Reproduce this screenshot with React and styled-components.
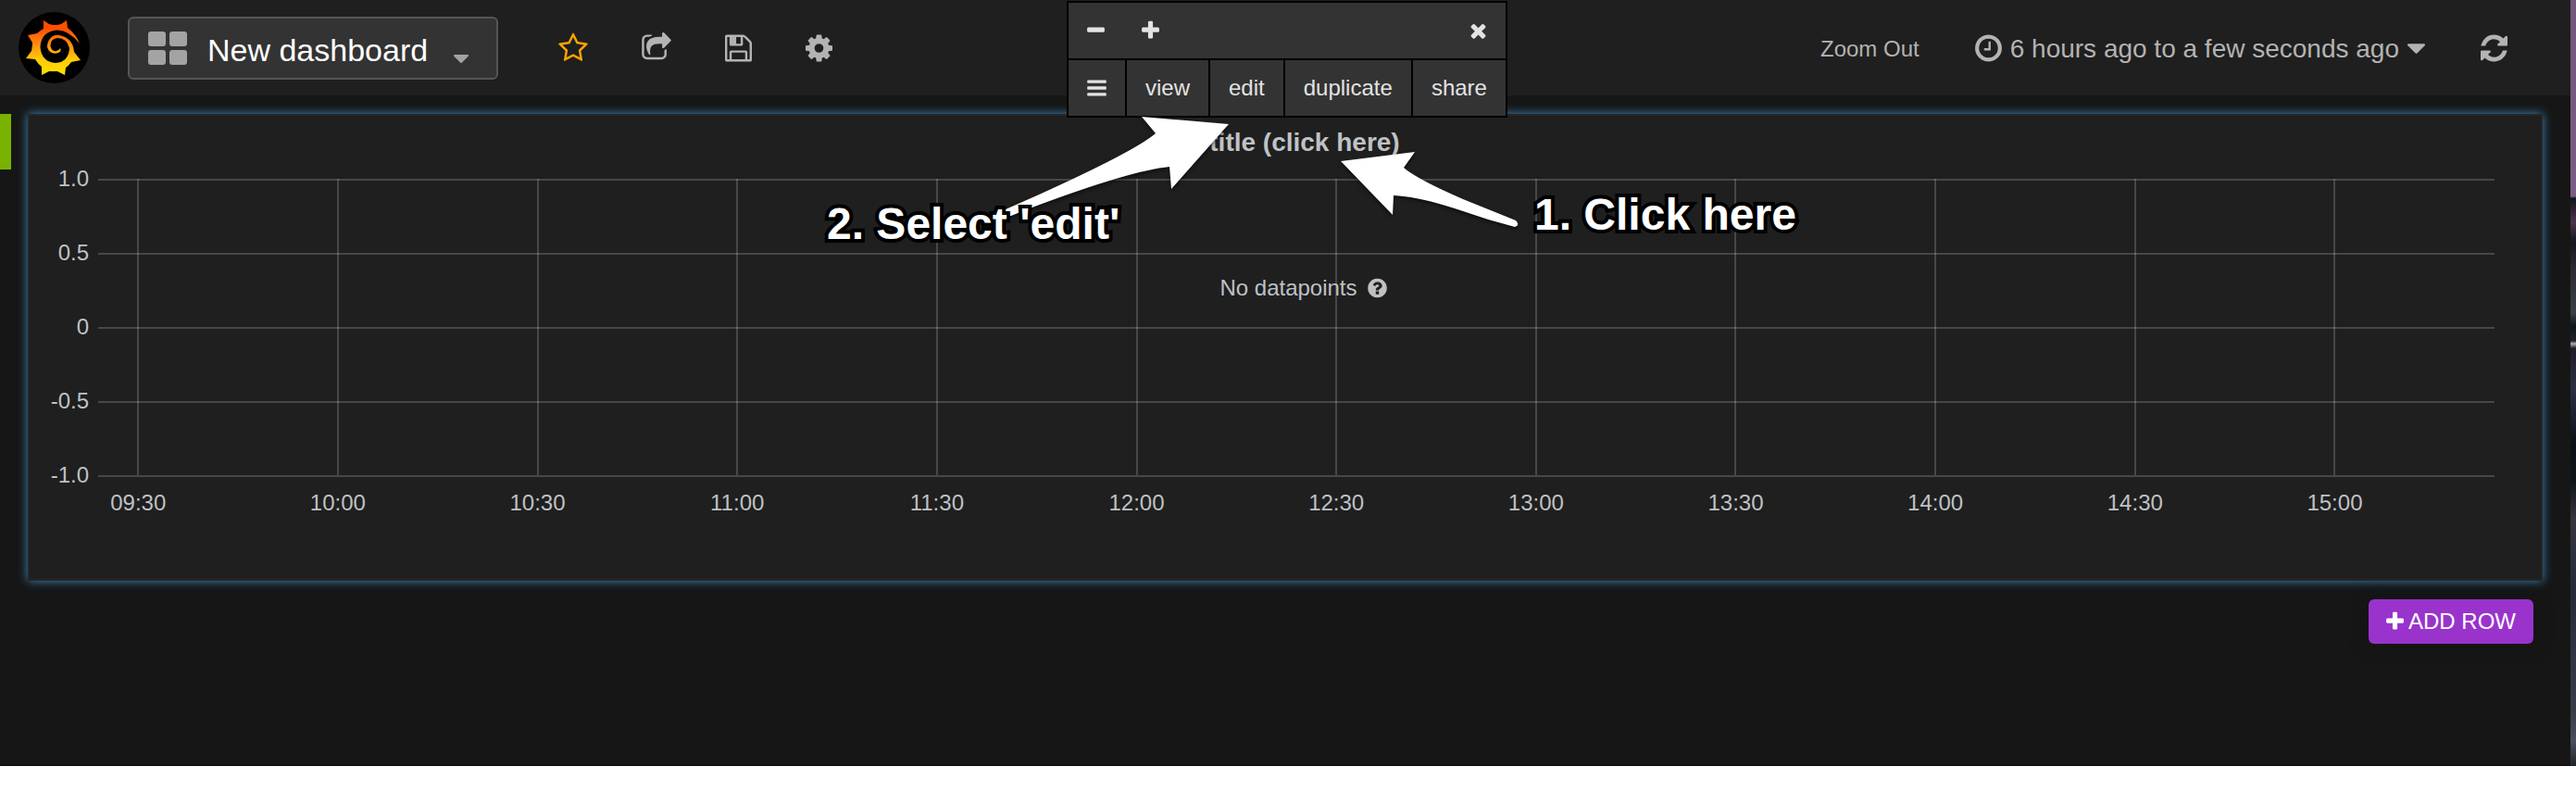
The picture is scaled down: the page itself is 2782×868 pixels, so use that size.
import React from 'react';
import styled, { createGlobalStyle } from 'styled-components';

const GlobalStyle = createGlobalStyle`
  * { box-sizing: border-box; }
  body {
    margin: 0;
    background: #fff;
    font-family: "Liberation Sans", Arial, sans-serif;
    font-size: 24px;
    color: #bfc2c5;
  }
  button { font-family: inherit; }
`;

/* ---------- icons ---------- */

const ICONS = {
  star: [1664, 'M1201 1004l306-297-422-62-189-382-189 382-422 62 306 297-73 421 378-199 377 199zm527-357q0 22-26 48l-363 354 86 500q1 7 1 20 0 50-41 50-19 0-40-12l-449-236-449 236q-22 12-40 12-21 0-31.5-14.5t-10.5-35.5q0-6 2-20l86-500-364-354q-25-27-25-48 0-37 56-46l502-73 225-455q19-41 49-41t49 41l225 455 502 73q56 9 56 46z'],
  share: [1664, 'M1472 989v259q0 119-84.5 203.5t-203.5 84.5h-832q-119 0-203.5-84.5t-84.5-203.5v-832q0-119 84.5-203.5t203.5-84.5h255q13 0 22.5 9.5t9.5 22.5q0 27-26 32-77 26-133 60-10 4-16 4h-112q-66 0-113 47t-47 113v832q0 66 47 113t113 47h832q66 0 113-47t47-113v-214q0-19 18-29 28-13 54-37 16-16 35-8 21 9 21 29zm237-496l-384 384q-18 19-45 19-12 0-25-5-39-17-39-59v-192h-160q-323 0-438 131-119 137-74 473 3 23-20 34-8 2-12 2-16 0-26-13-10-14-21-31t-39.5-68.5-49.5-99.5-38.5-114-17.5-122q0-49 3.5-91t14-90 28-88 47-81.5 68.5-74 94.5-61.5 124.5-48.5 159.5-30.5 196.5-11h160v-192q0-42 39-59 13-5 25-5 26 0 45 19l384 384q19 19 19 45t-19 45z'],
  save: [1536, 'M512 1536h768v-384h-768v384zm896 0h128v-896q0-14-10-38.5t-20-34.5l-281-281q-10-10-34-20t-39-10v416q0 40-28 68t-68 28h-576q-40 0-68-28t-28-68v-416h-128v1280h128v-416q0-40 28-68t68-28h832q40 0 68 28t28 68v416zm-384-928v-320q0-13-9.5-22.5t-22.5-9.5h-192q-13 0-22.5 9.5t-9.5 22.5v320q0 13 9.5 22.5t22.5 9.5h192q13 0 22.5-9.5t9.5-22.5zm640 32v928q0 40-28 68t-68 28h-1344q-40 0-68-28t-28-68v-1344q0-40 28-68t68-28h928q40 0 88 20t76 48l280 280q28 28 48 76t20 88z'],
  cog: [1536, 'M1152 896q0-106-75-181t-181-75-181 75-75 181 75 181 181 75 181-75 75-181zm512-109v222q0 12-8 23t-20 13l-185 28q-19 54-39 91 35 50 107 138 10 12 10 25t-9 23q-27 37-99 108t-94 71q-12 0-26-9l-138-108q-44 23-91 38-16 136-29 186-7 28-36 28h-222q-14 0-24.5-8.5t-11.5-21.5l-28-184q-49-16-90-37l-141 107q-10 9-25 9-14 0-25-11-126-114-165-168-7-10-7-23 0-12 8-23 15-21 51-66.5t54-70.5q-27-50-41-99l-183-27q-13-2-21-12.5t-8-23.5v-222q0-12 8-23t19-13l186-28q14-46 39-92-40-57-107-138-10-12-10-24 0-10 9-23 26-36 98.5-107.5t94.5-71.5q13 0 26 10l138 107q44-23 91-38 16-136 29-186 7-28 36-28h222q14 0 24.5 8.5t11.5 21.5l28 184q49 16 90 37l142-107q9-9 24-9 13 0 25 10 129 119 165 170 7 8 7 22 0 12-8 23-15 21-51 66.5t-54 70.5q26 50 41 98l183 28q13 2 21 12.5t8 23.5z'],
  clock: [1536, 'M1024 544v448q0 14-9 23t-23 9h-320q-14 0-23-9t-9-23v-64q0-14 9-23t23-9h224v-352q0-14 9-23t23-9h64q14 0 23 9t9 23zm416 352q0-148-73-273t-198-198-273-73-273 73-198 198-73 273 73 273 198 198 273 73 273-73 198-198 73-273zm224 0q0 209-103 385.5t-279.5 279.5-385.5 103-385.5-103-279.5-279.5-103-385.5 103-385.5 279.5-279.5 385.5-103 385.5 103 279.5 279.5 103 385.5z'],
  refresh: [1536, 'M1639 1056q0 5-1 7-64 268-268 434.5t-478 166.5q-146 0-282.5-55t-243.5-157l-129 129q-19 19-45 19t-45-19-19-45v-448q0-26 19-45t45-19h448q26 0 45 19t19 45-19 45l-137 137q71 66 161 102t187 36q134 0 250-65t186-179q11-17 53-117 8-23 30-23h192q13 0 22.5 9.5t9.5 22.5zm25-800v448q0 26-19 45t-45 19h-448q-26 0-45-19t-19-45 19-45l138-138q-148-137-349-137-134 0-250 65t-186 179q-11 17-53 117-8 23-30 23h-199q-13 0-22.5-9.5t-9.5-22.5v-7q65-268 270-434.5t480-166.5q146 0 284 55.5t245 156.5l130-129q19-19 45-19t45 19 19 45z'],
  plus: [1408, 'M1600 736v192q0 40-28 68t-68 28h-416v416q0 40-28 68t-68 28h-192q-40 0-68-28t-28-68v-416h-416q-40 0-68-28t-28-68v-192q0-40 28-68t68-28h416v-416q0-40 28-68t68-28h192q40 0 68 28t28 68v416h416q40 0 68 28t28 68z'],
  minus: [1408, 'M1600 736v192q0 40-28 68t-68 28h-1216q-40 0-68-28t-28-68v-192q0-40 28-68t68-28h1216q40 0 68 28t28 68z'],
  times: [1408, 'M1490 1322q0 40-28 68l-136 136q-28 28-68 28t-68-28l-294-294-294 294q-28 28-68 28t-68-28l-136-136q-28-28-28-68t28-68l294-294-294-294q-28-28-28-68t28-68l136-136q28-28 68-28t68 28l294 294 294-294q28-28 68-28t68 28l136 136q28 28 28 68t-28 68l-294 294 294 294q28 28 28 68z'],
  bars: [1536, 'M1664 1344v128q0 26-19 45t-45 19h-1408q-26 0-45-19t-19-45v-128q0-26 19-45t45-19h1408q26 0 45 19t19 45zm0-512v128q0 26-19 45t-45 19h-1408q-26 0-45-19t-19-45v-128q0-26 19-45t45-19h1408q26 0 45 19t19 45zm0-512v128q0 26-19 45t-45 19h-1408q-26 0-45-19t-19-45v-128q0-26 19-45t45-19h1408q26 0 45 19t19 45z'],
  caret: [1024, 'M1408 704q0 26-19 45l-448 448q-19 19-45 19t-45-19l-448-448q-19-19-19-45t19-45 45-19h896q26 0 45 19t19 45z'],
  question: [1536, 'M1024 1376v-192q0-14-9-23t-23-9h-192q-14 0-23 9t-9 23v192q0 14 9 23t23 9h192q14 0 23-9t9-23zm256-672q0-88-55.5-163t-138.5-116-170-41q-243 0-371 213-15 24 8 42l132 100q7 6 19 6 16 0 25-12 53-68 86-92 34-24 86-24 48 0 85.5 26t37.5 59q0 38-20 61t-68 45q-63 28-115.5 86.5t-52.5 125.5v36q0 14 9 23t23 9h192q14 0 23-9t9-23q0-19 21.5-49.5t54.5-49.5q32-18 49-28.5t46-35 44.5-48 28-60.5 12.5-81zm384 192q0 209-103 385.5t-279.5 279.5-385.5 103-385.5-103-279.5-279.5-103-385.5 103-385.5 279.5-279.5 385.5-103 385.5 103 279.5 279.5 103 385.5z'],
};

const Glyph = styled.svg`
  display: block;
  flex: none;
  fill: currentColor;
`;

function Icon({ name, size = 24 }) {
  const [advance, d] = ICONS[name];
  return (
    <Glyph
      aria-hidden="true"
      height={size}
      width={Math.round((size * advance) / 1792)}
      viewBox={`${(1792 - advance) / 2} 0 ${advance} 1792`}
    >
      <path d={d} />
    </Glyph>
  );
}

function Logo() {
  return (
    <svg width="77" height="77" viewBox="0 0 77 77" role="img" aria-label="Grafana">
      <defs>
        <linearGradient id="flame" gradientUnits="userSpaceOnUse" x1="0" y1="9" x2="0" y2="68">
          <stop offset="0.15" stopColor="#ff4e00" />
          <stop offset="0.4" stopColor="#ff8410" />
          <stop offset="0.7" stopColor="#ffc80a" />
          <stop offset="1" stopColor="#ffe000" />
        </linearGradient>
      </defs>
      <circle cx="38.5" cy="38.5" r="38.5" fill="#000" />
      <path
        fill="url(#flame)"
        d="M27 9 L33 13 Q40 15 46 13 L52 9 L53 17 Q62 24 66 34 Q55 20 42 19.500 Q24 21 23.500 38 Q25 54 40 55
           Q54 54 55 39 Q52 28 42 28 Q34 29 34.500 37 Q36 43 41 42 Q44 41 45 39 Q47 42 43 44 Q37 46 33 42
           Q29 37 33 30 Q37 24 44 25 Q59 28 60 43 L67 52 L57 54 Q54 58 51 60 L50 68 L42 64
           Q37 64 33 64 L25 68 L25 59 Q21 56 18 51 L8 50 L14 42 Q15 37 15 33 L10 25 L20 23 Q23 20 27 18 Z"
      />
    </svg>
  );
}

function TilesIcon() {
  return (
    <Glyph width="42" height="36" viewBox="0 0 42 36" aria-hidden="true">
      <rect x="0" y="0" width="19" height="16" rx="3" />
      <rect x="23" y="0" width="19" height="16" rx="3" />
      <rect x="0" y="20" width="19" height="16" rx="3" />
      <rect x="23" y="20" width="19" height="16" rx="3" />
    </Glyph>
  );
}

/* ---------- page frame ---------- */

const Window = styled.div`
  position: relative;
  display: flex;
`;

const Page = styled.div`
  position: relative;
  flex: 1;
  min-width: 0;
  padding-bottom: 132px;
  background: #161616;
  box-shadow: inset 0 -1px #100c10;
`;

const Wallpaper = styled.div`
  width: 6px;
  background: linear-gradient(
    #74577d 0, #7a5d86 212px, #12141c 214px, #4a3548 240px, #14161e 262px, #2a2a34 290px,
    #3a4048 338px, #10141a 352px, #20222a 368px, #b0b0b8 371px, #231c26 376px, #2a3044 420px,
    #0c1016 480px, #10131a 520px, #35363f 560px, #262a38 640px, #2f3444 700px,
    #3a3c46 770px, #4c4e5a 800px, #22242c 827px
  );
`;

/* ---------- top bar ---------- */

const TopBar = styled.header`
  display: flex;
  align-items: center;
  height: 103px;
  padding: 0 68px 0 20px;
  background: #1f1f1f;
  color: #b3b3b3;
`;

const LogoLink = styled.a`
  display: flex;
  margin-right: 41px;
`;

const DashboardPicker = styled.button`
  display: flex;
  align-items: center;
  width: 400px;
  height: 68px;
  padding: 0 30px 0 20px;
  border: 2px solid #555;
  border-radius: 6px;
  background: #333;
  color: #a3a3a3;
`;

const DashboardName = styled.span`
  flex: 1;
  padding: 4px 0 0 22px;
  font-size: 34px;
  line-height: 40px;
  text-align: left;
  color: #fff;
`;

const CaretSlot = styled.span`
  padding-top: 22px;
`;

const IconNav = styled.nav`
  display: flex;
  margin-left: 36px;
`;

const BarButton = styled.button`
  display: flex;
  align-items: center;
  gap: 9px;
  padding: ${(p) => p.$pad || '0 29px'};
  border: 0;
  background: none;
  font-size: ${(p) => p.$size || '24px'};
  line-height: 34px;
  color: ${(p) => p.$color || 'inherit'};
  white-space: nowrap;
`;

const BarLabel = styled.span`
  padding-top: 3px;
`;

const TimeNav = styled.nav`
  display: flex;
  align-items: center;
  gap: 60px;
  margin-left: auto;
`;

/* ---------- panel ---------- */

const Row = styled.section`
  display: flex;
  align-items: flex-start;
  padding: 20px 30px 20px 0;
`;

const RowHandle = styled.button`
  width: 12px;
  height: 60px;
  margin-right: 18px;
  padding: 0;
  border: 0;
  background: #77b300;
`;

const Panel = styled.article`
  flex: 1;
  min-width: 0;
  height: 504px;
  border: 2px solid #262626;
  background: #1f1f1f;
  box-shadow: 0 0 10px #3f8bc0;
`;

const PanelTitle = styled.h2`
  margin: 0;
  padding-top: 12px;
  font-size: 28px;
  line-height: 34px;
  font-weight: 700;
  text-align: center;
`;

const Chart = styled.div`
  display: flex;
  padding: 9px 50px 0 0;
`;

const YAxis = styled.div`
  display: flex;
  flex-direction: column;
  justify-content: space-between;
  width: 64px;
  height: 346px;
  margin-right: 10px;
  line-height: 26px;
  text-align: right;
`;

const Plot = styled.div`
  position: relative;
  flex: 1;
  min-width: 0;
  padding-top: 13px;
`;

const PlotSvg = styled.svg`
  display: block;
  width: 100%;
  height: 370px;
  overflow: visible;

  line {
    stroke: #fff;
    stroke-opacity: 0.18;
    stroke-width: 2;
    shape-rendering: crispEdges;
  }
  text {
    fill: #bfc2c5;
    font-size: 24px;
    text-anchor: middle;
  }
`;

const EmptyNote = styled.div`
  position: absolute;
  top: 116px;
  left: 0;
  right: 0;
  display: flex;
  align-items: center;
  justify-content: center;
  gap: 11px;
  line-height: 30px;
  padding-left: 15px;
`;

const AddRowBar = styled.div`
  display: flex;
  justify-content: flex-end;
  padding-right: 40px;
`;

const AddRowButton = styled.button`
  display: flex;
  align-items: center;
  justify-content: center;
  gap: 5px;
  height: 48px;
  padding: 0 19px;
  border: 0;
  border-radius: 6px;
  background: #9933cc;
  color: #fff;
  font-size: 24px;
  box-shadow: 0 0 20px #141414;
`;

/* ---------- floating panel menu ---------- */

const PanelMenu = styled.div`
  position: absolute;
  top: 1px;
  left: calc(50% - 236px);
  display: flex;
  flex-direction: column;
  gap: 2px;
  width: 476px;
  border: 2px solid #000;
  background: #000;
`;

const MenuRow = styled.div`
  display: flex;
  gap: ${(p) => p.$gap || '0'};
  background: ${(p) => (p.$gap ? '#000' : '#333')};
`;

const MenuButton = styled.button`
  display: flex;
  flex: ${(p) => (p.$grow ? '1' : 'none')};
  align-items: center;
  justify-content: center;
  height: 60px;
  margin-left: ${(p) => (p.$end ? 'auto' : '0')};
  padding: 0 20px;
  border: 0;
  background: #333;
  color: #e3e3e3;
  font-size: 24px;
`;

/* ---------- annotations ---------- */

const Arrows = styled.svg`
  position: absolute;
  top: 110px;
  left: calc(50% - 308px);
  filter: drop-shadow(0 2px 2px rgba(0, 0, 0, 0.6));
  pointer-events: none;
`;

const Callout = styled.p`
  position: absolute;
  top: ${(p) => p.$top};
  left: calc(50% ${(p) => p.$shift});
  margin: 0;
  font-size: 48px;
  line-height: 56px;
  font-weight: 700;
  white-space: nowrap;
  color: #fff;
  -webkit-text-stroke: 8px #000;
  paint-order: stroke fill;
  stroke-linejoin: round;
  text-shadow: 0 2px 3px rgba(0, 0, 0, 0.6);
`;

const yTicks = ['1.0', '0.5', '0', '-0.5', '-1.0'];
const xTicks = [
  '09:30', '10:00', '10:30', '11:00', '11:30', '12:00',
  '12:30', '13:00', '13:30', '14:00', '14:30', '15:00',
];
const xAt = (i) => `${(1.67 + i * 8.333).toFixed(3)}%`;

export default function App() {
  return (
    <>
      <GlobalStyle />
      <Window>
        <Page>
          <TopBar>
            <LogoLink href="#home"><Logo /></LogoLink>
            <DashboardPicker>
              <TilesIcon />
              <DashboardName>New dashboard</DashboardName>
              <CaretSlot><Icon name="caret" size={28} /></CaretSlot>
            </DashboardPicker>
            <IconNav>
              <BarButton aria-label="Star" $color="#ffa500"><Icon name="star" size={34} /></BarButton>
              <BarButton aria-label="Share dashboard"><Icon name="share" size={34} /></BarButton>
              <BarButton aria-label="Save"><Icon name="save" size={34} /></BarButton>
              <BarButton aria-label="Settings"><Icon name="cog" size={34} /></BarButton>
            </IconNav>
            <TimeNav>
              <BarButton $pad="0"><BarLabel>Zoom Out</BarLabel></BarButton>
              <BarButton $pad="0" $size="28px">
                <Icon name="clock" size={34} />
                <BarLabel>6 hours ago to a few seconds ago</BarLabel>
                <Icon name="caret" size={34} />
              </BarButton>
              <BarButton $pad="0" aria-label="Refresh"><Icon name="refresh" size={34} /></BarButton>
            </TimeNav>
          </TopBar>

          <Row>
            <RowHandle aria-label="Row menu" />
            <Panel>
              <PanelTitle>no title (click here)</PanelTitle>
              <Chart>
                <YAxis>
                  {yTicks.map((t) => <span key={t}>{t}</span>)}
                </YAxis>
                <Plot>
                  <PlotSvg>
                    {yTicks.map((t, i) => (
                      <line key={t} x1="0" x2="100%" y1={1 + i * 80} y2={1 + i * 80} />
                    ))}
                    {xTicks.map((t, i) => (
                      <g key={t}>
                        <line x1={xAt(i)} x2={xAt(i)} y1="0" y2="320" />
                        <text x={xAt(i)} y="358">{t}</text>
                      </g>
                    ))}
                  </PlotSvg>
                  <EmptyNote>No datapoints <Icon name="question" size={24} /></EmptyNote>
                </Plot>
              </Chart>
            </Panel>
          </Row>

          <AddRowBar>
            <AddRowButton><Icon name="plus" />ADD ROW</AddRowButton>
          </AddRowBar>

          <PanelMenu>
            <MenuRow>
              <MenuButton aria-label="Shrink"><Icon name="minus" /></MenuButton>
              <MenuButton aria-label="Grow"><Icon name="plus" /></MenuButton>
              <MenuButton aria-label="Remove" $end><Icon name="times" /></MenuButton>
            </MenuRow>
            <MenuRow $gap="2px">
              <MenuButton aria-label="Menu"><Icon name="bars" /></MenuButton>
              <MenuButton>view</MenuButton>
              <MenuButton>edit</MenuButton>
              <MenuButton>duplicate</MenuButton>
              <MenuButton $grow>share</MenuButton>
            </MenuRow>
          </PanelMenu>

          <Arrows width="570" height="150" viewBox="1080 110 570 150" fill="#fff" aria-hidden="true">
            <path d="M1327 134L1233 126L1248 144Q1226 163 1120 211L1086 226Q1084 234 1092 233Q1104 228 1120 222Q1222 184 1263 180L1265 204Z" />
            <path d="M1448 174L1528 164L1516 181Q1531 194 1580 215L1637 238Q1642 243 1636 245Q1608 238 1580 228Q1532 212 1505 211L1504 232Z" />
          </Arrows>
          <Callout $top="214px" $shift="- 495px">2. Select 'edit'</Callout>
          <Callout $top="204px" $shift="+ 269px">1. Click here</Callout>
        </Page>
        <Wallpaper />
      </Window>
    </>
  );
}
